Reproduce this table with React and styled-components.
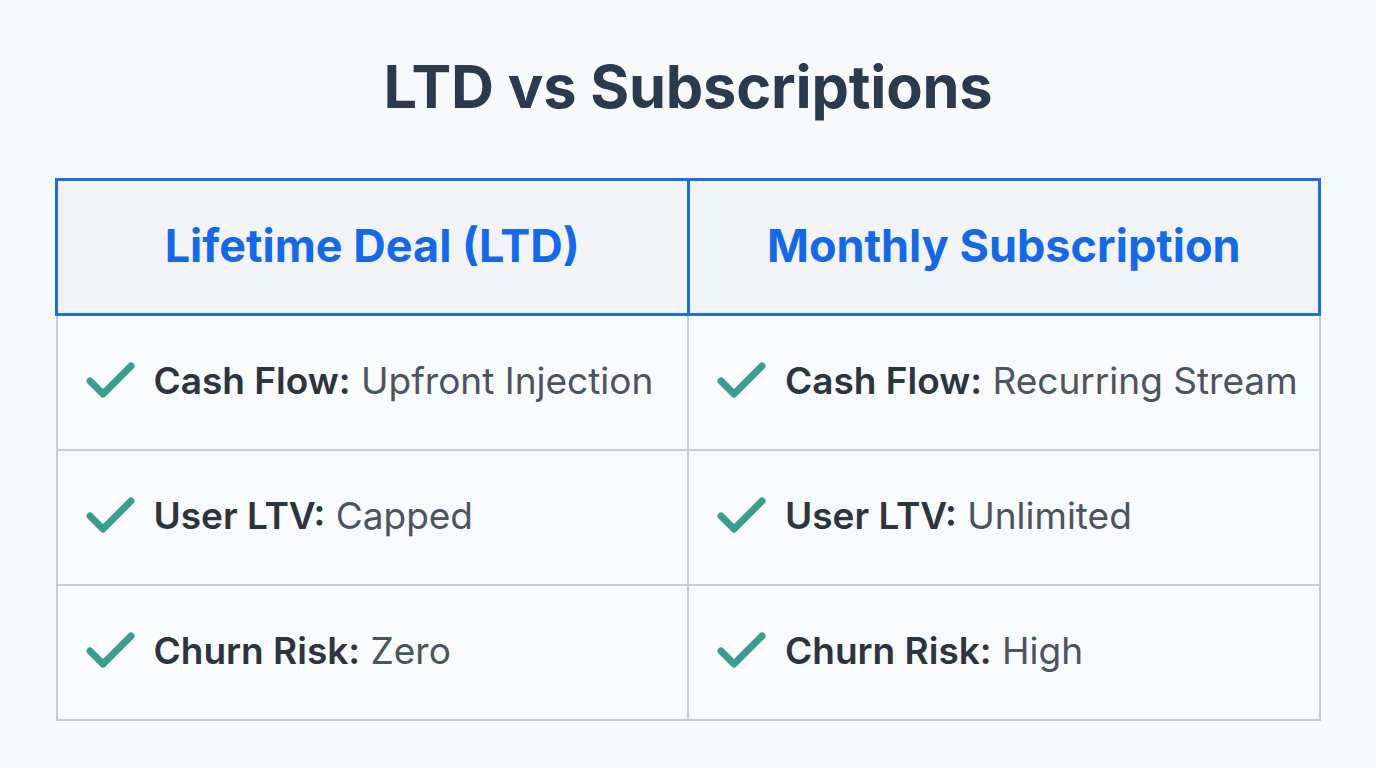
import styled, { createGlobalStyle } from "styled-components";

const GlobalStyle = createGlobalStyle`
  html, body {
    margin: 0;
    padding: 0;
    background: #f8f9fa;
  }
  body {
    font-family: Inter, "Noto Sans", "Liberation Sans", sans-serif;
  }
`;

const Page = styled.div`
  width: 1376px;
  height: 768px;
  box-sizing: border-box;
  padding: 50px 55px 0;
  display: flex;
  flex-direction: column;
  align-items: center;
`;

const Title = styled.h1`
  margin: 0 0 56px;
  font-size: 59.5px;
  line-height: 72px;
  font-weight: 700;
  color: #2b3a4c;
  letter-spacing: -0.2px;
`;

const Table = styled.table`
  width: 100%;
  border-collapse: collapse;
  table-layout: fixed;
`;

const HeadCell = styled.th`
  height: 129px;
  padding: 0 0 3px;
  border: 3px solid #1a6fe6;
  background: #f2f3f6;
  color: #1669e6;
  font-size: 45px;
  font-weight: 700;
  text-align: center;
`;

const Cell = styled.td`
  height: 128px;
  padding: 0 0 5px 28px;
  border: 2px solid #c9ccd3;
  background: #f9fafb;
`;

const Item = styled.div`
  display: flex;
  align-items: center;
  gap: 18px;
  font-size: 37px;
  color: #4b5461;
  white-space: nowrap;
`;

const Label = styled.span`
  font-weight: 600;
  color: #2c343f;
`;

const Check = () => (
  <svg width="50" height="38" viewBox="0 0 50 38" fill="none">
    <path
      d="M4 20 L17 33 L45 5"
      stroke="#3a9e8e"
      strokeWidth="7"
      strokeLinecap="round"
      strokeLinejoin="round"
    />
  </svg>
);

const rows = [
  [
    ["Cash Flow:", "Upfront Injection"],
    ["Cash Flow:", "Recurring Stream"],
  ],
  [
    ["User LTV:", "Capped"],
    ["User LTV:", "Unlimited"],
  ],
  [
    ["Churn Risk:", "Zero"],
    ["Churn Risk:", "High"],
  ],
];

const App = () => (
  <Page>
    <GlobalStyle />
    <Title>LTD vs Subscriptions</Title>
    <Table>
      <thead>
        <tr>
          <HeadCell>Lifetime Deal (LTD)</HeadCell>
          <HeadCell>Monthly Subscription</HeadCell>
        </tr>
      </thead>
      <tbody>
        {rows.map((row, i) => (
          <tr key={i}>
            {row.map(([label, value], j) => (
              <Cell key={j}>
                <Item>
                  <Check />
                  <span>
                    <Label>{label}</Label> {value}
                  </span>
                </Item>
              </Cell>
            ))}
          </tr>
        ))}
      </tbody>
    </Table>
  </Page>
);

export default App;
